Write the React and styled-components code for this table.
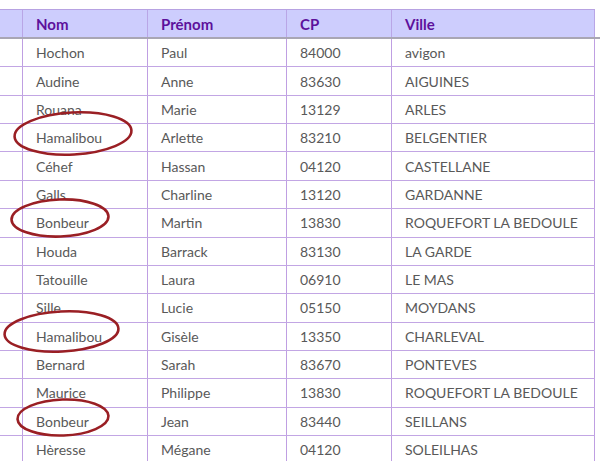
import React from "react";
import styled, { createGlobalStyle } from "styled-components";

const rows = [
  ["Hochon", "Paul", "84000", "avigon"],
  ["Audine", "Anne", "83630", "AIGUINES"],
  ["Rouana", "Marie", "13129", "ARLES"],
  ["Hamalibou", "Arlette", "83210", "BELGENTIER", { x: -10, y: -13, w: 120, h: 45, r: -3 }],
  ["Céhef", "Hassan", "04120", "CASTELLANE"],
  ["Galls", "Charline", "13120", "GARDANNE"],
  ["Bonbeur", "Martin", "13830", "ROQUEFORT LA BEDOULE", { x: -13, y: -11, w: 100, h: 40, r: -2 }],
  ["Houda", "Barrack", "83130", "LA GARDE"],
  ["Tatouille", "Laura", "06910", "LE MAS"],
  ["Sille", "Lucie", "05150", "MOYDANS"],
  ["Hamalibou", "Gisèle", "13350", "CHARLEVAL", { x: -20, y: -13, w: 117, h: 43, r: -3 }],
  ["Bernard", "Sarah", "83670", "PONTEVES"],
  ["Maurice", "Philippe", "13830", "ROQUEFORT LA BEDOULE"],
  ["Bonbeur", "Jean", "83440", "SEILLANS", { x: -7, y: -10, w: 94, h: 39, r: -2 }],
  ["Hèresse", "Mégane", "04120", "SOLEILHAS"],
];

const Global = createGlobalStyle`
  body {
    margin: 0;
    background: #ffffff;
    font-family: Lato, "Open Sans", sans-serif;
    overflow: hidden;
  }
`;

const cols = "23px 125px 139px 105px 203px";

const Sheet = styled.div`
  width: 600px;
  height: 461px;
  padding-top: 9px;
  box-sizing: border-box;
  overflow: hidden;
`;

const HeadBar = styled.div`
  width: 600px;
  border-bottom: 2px solid #a9a6b4;
`;

const HeadRow = styled.div`
  display: grid;
  grid-template-columns: ${cols};
  width: 595px;
  height: 28px;
  background: #cdcdfd;
  border-top: 1px solid #b7a2e2;
  box-sizing: border-box;
`;

const HeadCell = styled.div`
  display: flex;
  align-items: center;
  padding-left: 13px;
  border-right: 1px solid #b9a6e6;
  color: #5d119c;
  font-weight: 700;
  font-size: 15px;
`;

const Row = styled.div`
  display: grid;
  grid-template-columns: ${cols};
  width: 595px;
  height: 28.36px;
  box-sizing: border-box;
  border-bottom: 1px solid #c2a6e4;
`;

const Cell = styled.div`
  position: relative;
  display: flex;
  align-items: center;
  padding-left: 13px;
  border-right: 1px solid #bf9fe2;
  color: #595959;
  font-size: 14px;
  white-space: nowrap;
`;

const Ring = styled.svg`
  position: absolute;
  left: ${(p) => p.$x}px;
  top: ${(p) => p.$y}px;
  width: ${(p) => p.$w}px;
  height: ${(p) => p.$h}px;
  overflow: visible;
  pointer-events: none;
  transform: rotate(${(p) => p.$r}deg);
`;

const Circled = ({ ring }) => (
  <Ring $x={ring.x} $y={ring.y} $w={ring.w} $h={ring.h} $r={ring.r}>
    <ellipse
      cx={ring.w / 2}
      cy={ring.h / 2}
      rx={ring.w / 2 - 1.5}
      ry={ring.h / 2 - 1.5}
      fill="none"
      stroke="#9a1f24"
      strokeWidth="2.6"
    />
  </Ring>
);

export default function App() {
  return (
    <>
      <Global />
      <Sheet>
        <HeadBar>
          <HeadRow>
            <HeadCell />
            <HeadCell>Nom</HeadCell>
            <HeadCell>Prénom</HeadCell>
            <HeadCell>CP</HeadCell>
            <HeadCell>Ville</HeadCell>
          </HeadRow>
        </HeadBar>
        {rows.map(([nom, prenom, cp, ville, ring], i) => (
          <Row key={i}>
            <Cell />
            <Cell>
              {nom}
              {ring && <Circled ring={ring} />}
            </Cell>
            <Cell>{prenom}</Cell>
            <Cell>{cp}</Cell>
            <Cell>{ville}</Cell>
          </Row>
        ))}
      </Sheet>
    </>
  );
}
